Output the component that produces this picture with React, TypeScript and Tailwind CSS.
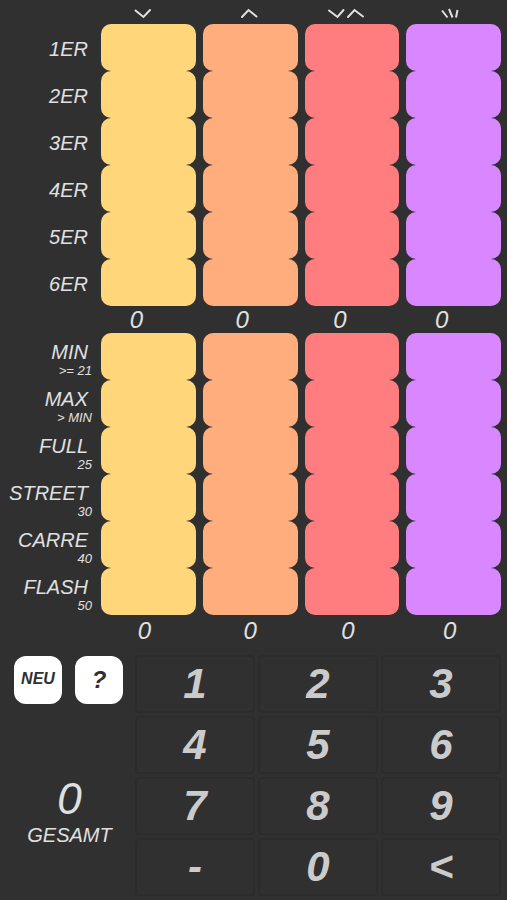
import { useState } from "react";

type Column = {
  id: string;
  color: string;
  headPad: string;
  upperPad: string;
  lowerPad: string;
};

type Row = {
  label: string;
  hint?: string;
};

const columns: Column[] = [
  { id: "down", color: "bg-[#ffd77a]", headPad: "pr-2.5", upperPad: "pr-6", lowerPad: "pr-2" },
  { id: "up", color: "bg-[#ffad7d]", headPad: "pr-0.5", upperPad: "pr-4", lowerPad: "pr-0" },
  { id: "both", color: "bg-[#ff7d7e]", headPad: "pr-3", upperPad: "pr-6", lowerPad: "pr-2" },
  { id: "free", color: "bg-[#d987ff]", headPad: "pr-2", upperPad: "pr-6", lowerPad: "pr-2" }
];

const upperRows: Row[] = [
  { label: "1ER" },
  { label: "2ER" },
  { label: "3ER" },
  { label: "4ER" },
  { label: "5ER" },
  { label: "6ER" }
];

const lowerRows: Row[] = [
  { label: "MIN", hint: ">= 21" },
  { label: "MAX", hint: "> MIN" },
  { label: "FULL", hint: "25" },
  { label: "STREET", hint: "30" },
  { label: "CARRE", hint: "40" },
  { label: "FLASH", hint: "50" }
];

const keys = ["1", "2", "3", "4", "5", "6", "7", "8", "9", "-", "0", "<"];

export default function App() {
  const [entry, setEntry] = useState("");
  const [scores, setScores] = useState<Record<string, number>>({});

  const sum = (rows: Row[], column: Column) =>
    rows.reduce((total, row) => total + (scores[`${column.id}-${row.label}`] ?? 0), 0);

  const press = (key: string) => {
    if (key === "<") setEntry(entry.slice(0, -1));
    else setEntry(entry + key);
  };

  const write = (cell: string) => {
    const value = Number(entry);
    if (entry === "" || Number.isNaN(value)) return;
    setScores({ ...scores, [cell]: value });
    setEntry("");
  };

  const total = Object.values(scores).reduce((a, b) => a + b, 0);

  return (
    <main className="min-h-screen bg-[#303030] pr-1.5 font-['Liberation_Sans',Arial,sans-serif] text-[#e0e0e0] italic">
      <div className="grid h-6 grid-cols-[94px_repeat(4,minmax(0,1fr))] gap-x-[7px]">
        <span />
        {columns.map((column) => (
          <div key={column.id} className={`flex justify-center pt-2 ${column.headPad}`}>
            <ColumnIcon id={column.id} />
          </div>
        ))}
      </div>

      <ScoreBlock rows={upperRows} scores={scores} onWrite={write} />
      <div className="grid h-[27px] grid-cols-[94px_repeat(4,minmax(0,1fr))] gap-x-[7px]">
        <span />
        {columns.map((column) => (
          <div key={column.id} className={`text-center text-2xl leading-7 ${column.upperPad}`}>
            {sum(upperRows, column)}
          </div>
        ))}
      </div>

      <ScoreBlock rows={lowerRows} scores={scores} onWrite={write} />
      <div className="grid h-10 grid-cols-[94px_repeat(4,minmax(0,1fr))] gap-x-[7px]">
        <span />
        {columns.map((column) => (
          <div key={column.id} className={`text-center text-2xl leading-8 ${column.lowerPad}`}>
            {sum(lowerRows, column)}
          </div>
        ))}
      </div>

      <div className="grid grid-cols-[135px_minmax(0,1fr)]">
        <div className="flex flex-col">
          <div className="flex gap-[13px] pt-px pl-3.5">
            <button
              type="button"
              onClick={() => setScores({})}
              className="size-12 rounded-xl bg-white pb-0.5 text-base font-bold text-[#303030] italic"
            >
              NEU
            </button>
            <button type="button" className="size-12 rounded-xl bg-white text-2xl font-bold text-[#303030] italic">
              ?
            </button>
          </div>
          <div className="mt-[70px] flex flex-col items-center pl-1 text-center">
            <div className="text-[44px] leading-[50px]">{total}</div>
            <div className="text-xl leading-[22px]">GESAMT</div>
          </div>
        </div>
        <div className="grid grid-cols-3 gap-[3px]">
          {keys.map((key) => (
            <button
              key={key}
              type="button"
              onClick={() => press(key)}
              className="h-[58px] rounded-sm border-2 border-[#2c2c2c] text-[42px] leading-none font-bold text-[#cbcbcb] italic"
            >
              {key}
            </button>
          ))}
        </div>
      </div>
    </main>
  );
}

function ScoreBlock({
  rows,
  scores,
  onWrite
}: {
  rows: Row[];
  scores: Record<string, number>;
  onWrite: (cell: string) => void;
}) {
  return (
    <div className="grid grid-cols-[94px_repeat(4,minmax(0,1fr))] gap-x-[7px]">
      {rows.map((row) => (
        <div key={row.label} className="contents">
          <div className={`h-[47px] text-right ${row.hint ? "pt-2" : "pt-3.5"}`}>
            <div className="pr-1.5 text-xl leading-[22px]">{row.label}</div>
            {row.hint && <div className="pr-0.5 text-[13px] leading-[15px]">{row.hint}</div>}
          </div>
          {columns.map((column) => {
            const cell = `${column.id}-${row.label}`;
            return (
              <button
                key={cell}
                type="button"
                aria-label={cell}
                onClick={() => onWrite(cell)}
                className={`h-[47px] rounded-[10px] text-2xl text-[#303030] ${column.color}`}
              >
                {scores[cell]}
              </button>
            );
          })}
        </div>
      ))}
    </div>
  );
}

function ColumnIcon({ id }: { id: string }) {
  const line = "h-3 fill-none stroke-[#e0e0e0] stroke-2";

  if (id === "down") {
    return (
      <svg viewBox="0 0 18 12" className={`w-[18px] ${line}`} strokeLinecap="round">
        <path d="M1.5 2.5 L9.5 9 L16 2" />
      </svg>
    );
  }
  if (id === "up") {
    return (
      <svg viewBox="0 0 18 12" className={`w-[18px] ${line}`} strokeLinecap="round">
        <path d="M2 9 L8.5 2 L16.5 8.5" />
      </svg>
    );
  }
  if (id === "both") {
    return (
      <svg viewBox="0 0 38 12" className={`w-[38px] ${line}`} strokeLinecap="round">
        <path d="M2 2.5 L10.5 9 L16.5 2 M21 9 L27.5 2 L36 8.5" />
      </svg>
    );
  }
  return (
    <svg viewBox="0 0 18 12" className={`w-[18px] ${line}`}>
      <path d="M1 2.5 L6.5 9.5 M8 1 L11.5 9.5 M16.5 2 L15 9.5" />
    </svg>
  );
}
